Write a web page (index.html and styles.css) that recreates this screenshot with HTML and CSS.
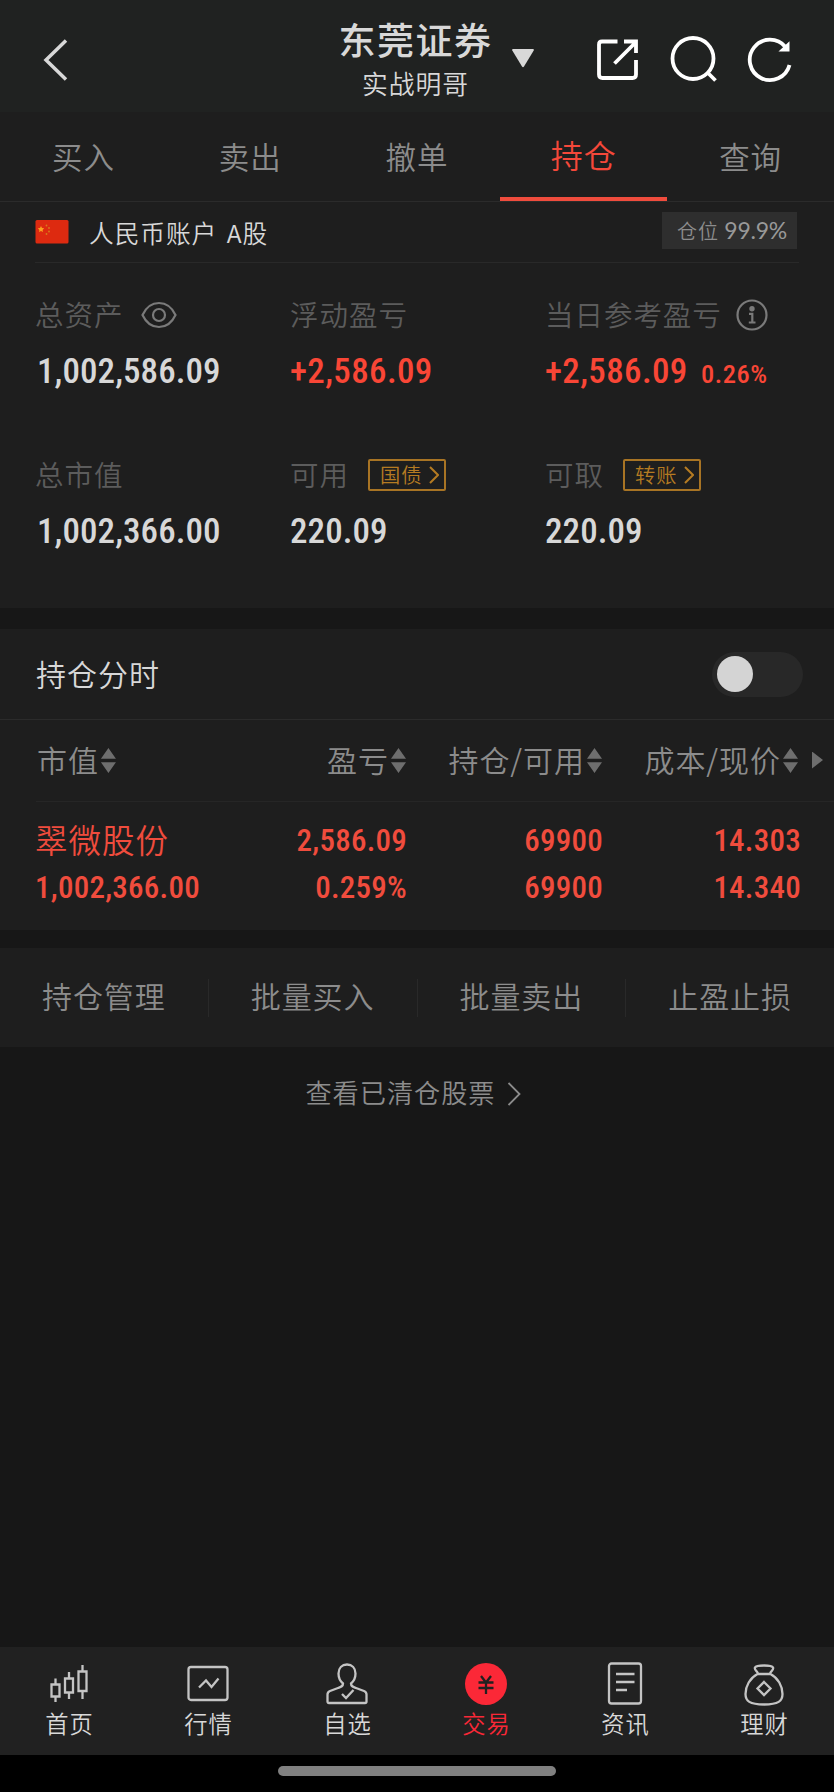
FILE: index.html
```
<!DOCTYPE html>
<html lang="zh-CN">
<head>
  <meta charset="UTF-8">
  <title>东莞证券 - 持仓</title>
  <meta name="viewport" content="width=device-width, initial-scale=1.0">
  <link rel="stylesheet" href="styles.css">
</head>
<body>

  <header class="header">
    <svg class="back" width="28" height="44" viewBox="0 0 28 44"><path d="M25 2.500 5 22l20 19.500"/></svg>
    <div class="title">
      <h1>东莞证券</h1>
      <p>实战明哥</p>
    </div>
    <div class="tools">
      <svg class="caret" width="24" height="20" viewBox="0 0 24 20"><path d="M2 1h20q1.500 0 .7 1.500L13 18.500q-1 1.500-2 0L1.300 2.500Q.5 1 2 1z"/></svg>
      <svg class="tool" width="48" height="48" viewBox="0 0 48 48"><path d="M24.500 6.500H9q-3 0-3 3v30q0 3.500 3.500 3.500h30q3.500 0 3.500-3.500V25M21.500 28.500 43 7M31 6.500h12V18"/></svg>
      <svg class="tool" width="48" height="48" viewBox="0 0 48 48"><circle cx="23" cy="23.500" r="20.500"/><path d="m37.500 37.500 8 8"/></svg>
      <svg class="tool" width="48" height="48" viewBox="0 0 48 48"><path d="M43.500 30A20.200 20.200 0 1 1 39.500 12"/><path class="solid" d="M35 15.500h7.500V8.500z"/></svg>
    </div>
  </header>

  <nav class="tabs">
    <a>买入</a>
    <a>卖出</a>
    <a>撤单</a>
    <a class="active">持仓</a>
    <a>查询</a>
  </nav>

  <section class="account">
    <div class="account-bar">
      <svg width="34" height="24" viewBox="0 0 34 24">
        <g stroke="none">
          <rect x=".5" width="33" height="23.500" rx="1.500" fill="#dd2a10"/>
          <path fill="#fba01f" d="m6 6 1 2 2.200.3-1.600 1.600.4 2.200-2-1-2 1 .4-2.200-1.600-1.600L5 8z"/>
          <g fill="#d87b1c"><circle cx="11.500" cy="5.500" r=".9"/><circle cx="14" cy="8" r=".9"/><circle cx="14" cy="11.500" r=".9"/><circle cx="11.500" cy="14" r=".9"/></g>
        </g>
      </svg>
      <span class="account-name">人民币账户 A股</span>
      <span class="position">仓位 <b>99.9%</b></span>
    </div>

    <div class="summary">
      <div class="cell">
        <div class="label"><span>总资产</span>
          <svg class="eye" width="36" height="28" viewBox="0 0 36 28"><path d="M1.500 14C9-2 27-2 34.500 14 27 30 9 30 1.500 14z"/><circle cx="18" cy="14" r="6"/></svg>
        </div>
        <div class="num value indent">1,002,586.09</div>
      </div>
      <div class="cell">
        <div class="label"><span>浮动盈亏</span></div>
        <div class="num value red">+2,586.09</div>
      </div>
      <div class="cell">
        <div class="label"><span>当日参考盈亏</span>
          <svg class="info" width="32" height="32" viewBox="0 0 32 32"><circle cx="16" cy="16" r="14.500"/><circle class="dot" cx="16" cy="9.800" r="2.700"/><path d="M13 14.800h3.300v8M12.800 23.500h6.700"/></svg>
        </div>
        <div class="num value red">+2,586.09 <small>0.26%</small></div>
      </div>
      <div class="cell">
        <div class="label"><span>总市值</span></div>
        <div class="num value indent">1,002,366.00</div>
      </div>
      <div class="cell">
        <div class="label"><span>可用</span> <a class="link-btn"><span>国债</span><svg width="10" height="18" viewBox="0 0 10 18"><path d="m1 1 8 8-8 8"/></svg></a></div>
        <div class="num value">220.09</div>
      </div>
      <div class="cell">
        <div class="label"><span>可取</span> <a class="link-btn"><span>转账</span><svg width="10" height="18" viewBox="0 0 10 18"><path d="m1 1 8 8-8 8"/></svg></a></div>
        <div class="num value">220.09</div>
      </div>
    </div>
  </section>

  <section class="holdings">
    <div class="chart-row">
      <span class="chart-name">持仓分时</span>
      <span class="switch"></span>
    </div>
    <div class="thead">
      <span>市值<i class="sort"></i></span>
      <span>盈亏<i class="sort"></i></span>
      <span>持仓/可用<i class="sort"></i></span>
      <span>成本/现价<i class="sort"></i></span>
      <i class="more"></i>
    </div>
    <div class="stock">
      <div><strong>翠微股份</strong><span class="num">1,002,366.00</span></div>
      <div><span class="num">2,586.09</span><span class="num">0.259%</span></div>
      <div><span class="num">69900</span><span class="num">69900</span></div>
      <div><span class="num">14.303</span><span class="num">14.340</span></div>
    </div>
  </section>

  <div class="actions">
    <a>持仓管理</a>
    <a>批量买入</a>
    <a>批量卖出</a>
    <a>止盈止损</a>
  </div>

  <a class="cleared"><span>查看已清仓股票</span><svg width="14" height="24" viewBox="0 0 14 24"><path d="m1.500 1 11 11-11 11"/></svg></a>

  <footer class="bottom-nav">
    <a>
      <svg width="44" height="44" viewBox="0 0 44 44"><path d="M4.500 22.500h8v12h-8zM8.500 16.500v6M8.500 34.500v5.500M18 16.500h8v14h-8zM22 10v6.500M22 30.500V37M31.500 9.500h8V29h-8zM35.500 3v6.500M35.500 29v8"/></svg>
      首页
    </a>
    <a>
      <svg width="44" height="44" viewBox="0 0 44 44"><rect x="2.500" y="5" width="39" height="33" rx="2.500"/><path d="m13 25.500 7-7 5.500 6.500 7-8.500"/></svg>
      行情
    </a>
    <a>
      <svg width="44" height="44" viewBox="0 0 44 44"><path d="M18 21.500c-3-2.500-4.500-6-4.500-10C13.500 6 17 2.500 22 2.500S30.500 6 30.500 11.500c0 4-1.500 7.500-4.500 10 0 3 2 3.500 5 4.500l8 3q2.500 1 2.500 3.500v7q0 1.500-1.500 1.500H4q-1.500 0-1.500-1.500v-7Q2.500 30 5 29l8-3c3-1 5-1.500 5-4.500z"/><path d="m17 32 4 4 7.500-8"/></svg>
      自选
    </a>
    <a class="current">
      <svg width="44" height="44" viewBox="0 0 44 44"><circle cx="22" cy="22" r="21"/><path d="m17 14 5 6.500 5-6.500M14.500 20.500h15M14.500 26h15M22 20.500V32"/></svg>
      交易
    </a>
    <a>
      <svg width="44" height="44" viewBox="0 0 44 44"><rect x="6" y="1.500" width="32" height="40" rx="2.500"/><path d="M13 12h18.500M13 20h18.500M13 28h11"/></svg>
      资讯
    </a>
    <a>
      <svg width="44" height="44" viewBox="0 0 44 44"><path d="M16 11.500c-1.500-3-4-4-3-6Q14 3.500 22 3.500t9 2c1 2-1.500 3-3 6M15.500 12h13C36 16 40.500 24 40.500 32c0 7-4 10.500-18.500 10.500S3.500 39 3.500 32C3.500 24 8 16 15.500 12z"/><path d="m22 20 6.500 6.500L22 33l-6.500-6.500z"/></svg>
      理财
    </a>
  </footer>
  <div class="home-bar"></div>

</body>
</html>
```
FILE: styles.css
```
* {
  box-sizing: border-box;
  margin: 0;
  padding: 0;
}

body {
  display: flex;
  flex-direction: column;
  height: 1792px;
  background: #171717;
  color: #d8d8d8;
  font-family: "Noto Sans CJK SC", sans-serif;
  font-weight: 350;
  letter-spacing: 0.06em;
  white-space: nowrap;
}

svg {
  display: block;
  flex: none;
  fill: none;
  stroke: currentColor;
}

.num {
  font-family: Roboto, sans-serif;
  font-weight: 500;
  font-stretch: 85%;
  letter-spacing: 0.008em;
}

.red {
  color: #f94636;
}

/* header */
.header {
  display: grid;
  grid-template-columns: 1fr 154px 1fr;
  height: 112px;
  padding: 0 40px 0 41px;
  background: #202221;
}

.back {
  margin-top: 38px;
  stroke-width: 3.5;
}

.title {
  display: flex;
  flex-direction: column;
  align-items: center;
  margin: 0 2px 0 -2px;
  padding-top: 13px;
}

.title h1 {
  font-size: 37px;
  font-weight: 500;
  letter-spacing: 0.04em;
  line-height: 52px;
}

.title p {
  font-size: 25.800px;
  line-height: 35px;
}

.tools {
  display: flex;
  padding-top: 35px;
  color: #fff;
}

.caret {
  margin: 13px auto 0 16px;
  fill: #d8d8d8;
  stroke: none;
}

.tool {
  margin-left: 28.500px;
  stroke-width: 3.8;
}

.tool .solid {
  fill: #fff;
  stroke-width: 2;
}

/* tabs */
.tabs {
  display: flex;
  height: 90px;
  background: #1e1e1e;
  border-bottom: 1px solid #2b2b2b;
}

.tabs a {
  flex: 1;
  height: 89px;
  color: #8c8c8c;
  font-size: 30.500px;
  line-height: 88px;
  text-align: center;
}

.tabs .active {
  color: #f5483a;
  font-size: 32px;
  line-height: 85px;
  border-bottom: 4px solid #f04c3d;
}

/* account */
.account {
  height: 406px;
  background: #1e1e1e;
}

.account-bar {
  display: flex;
  align-items: center;
  height: 61px;
  margin: 0 35px;
  border-bottom: 1px solid #292929;
}

.account-name {
  margin: 0 0 1px 20px;
  font-size: 24.700px;
  word-spacing: 3px;
}

.position {
  margin: 0 2px 3px auto;
  padding: 0 10px 0 15px;
  background: #2e2e2e;
  color: #8c8c8c;
  font-size: 20px;
  line-height: 37px;
}

.position b {
  color: #999;
  font-family: Lato, sans-serif;
  font-size: 23px;
  font-weight: 400;
  letter-spacing: -0.01em;
}

.summary {
  display: grid;
  grid-template-columns: 255px 255px 1fr;
  grid-auto-rows: 160px;
  padding: 32px 0 0 35px;
}

.label {
  display: flex;
  align-items: center;
  height: 40px;
  color: #5c5c5c;
  font-size: 28.500px;
}

.label > span {
  margin-bottom: 3px;
}

.eye,
.info {
  color: #7a7a7a;
  stroke-width: 2.2;
}

.eye {
  margin-left: 18px;
}

.info {
  margin-left: 14px;
}

.info .dot {
  fill: currentColor;
  stroke: none;
}

.link-btn {
  display: flex;
  align-items: center;
  gap: 7px;
  height: 32px;
  margin-left: 19px;
  padding: 0 5px 0 10px;
  border: 2px solid #a87424;
  border-radius: 2px;
  color: #b57b22;
  font-size: 20.300px;
}

.link-btn span {
  margin-bottom: 2px;
}

.link-btn svg {
  stroke-width: 2;
}

.value {
  margin-top: 17px;
  font-size: 35px;
  letter-spacing: 0.002em;
  line-height: 40px;
}

.value.red {
  letter-spacing: 0.01em;
}

.value small {
  margin-left: 5px;
  font-size: 26.500px;
  letter-spacing: 0.02em;
}

.indent {
  margin-left: 2px;
}

/* holdings */
.holdings {
  height: 301px;
  margin-top: 21px;
  background: #1e1e1e;
}

.chart-row {
  display: flex;
  align-items: center;
  justify-content: space-between;
  height: 91px;
  padding: 0 31px 0 36px;
  border-bottom: 1px solid #2b2b2b;
  font-size: 30px;
}

.chart-name {
  margin-bottom: 3px;
}

.switch {
  width: 91px;
  height: 45px;
  padding: 4px 5px;
  background: #282828;
  border-radius: 23px;
}

.switch::before {
  content: "";
  display: block;
  width: 36px;
  height: 36px;
  background: #d4d4d4;
  border-radius: 50%;
}

.thead,
.stock {
  display: grid;
  grid-template-columns: 170px 201px 196px 198px;
  margin-left: 36px;
}

.thead {
  grid-template-columns: 170px 201px 196px 196px 1fr;
  align-items: center;
  height: 82px;
  border-bottom: 1px solid #262626;
  color: #8c8c8c;
  font-size: 30px;
}

.thead span {
  display: flex;
  align-items: center;
  justify-content: flex-end;
  margin: 0 1px 4px -1px;
}

.thead span:first-child {
  justify-content: flex-start;
  margin-left: 1px;
}

/* pair of up and down triangles */
.sort {
  width: 15px;
  height: 25px;
  margin: 4px 0 0 2px;
  background: #6e6e6e;
  clip-path: polygon(50% 0, 100% 43%, 0 43%, 0 57%, 100% 57%, 50% 100%, 0 57%, 0 43%);
}

.more {
  width: 11px;
  height: 17px;
  margin: 0 0 1px 13px;
  background: #6e6e6e;
  clip-path: polygon(0 0, 100% 50%, 0 100%);
}

.stock {
  padding-top: 15px;
  color: #f04c3d;
  text-align: right;
}

.stock div:first-child {
  margin-left: -1px;
  text-align: left;
}

.stock strong,
.stock span {
  display: block;
  height: 47px;
  font-size: 31px;
  line-height: 48px;
}

.stock strong {
  font-size: 32.500px;
  font-weight: 350;
  line-height: 43px;
}

/* actions */
.actions {
  display: flex;
  align-items: center;
  height: 99px;
  margin-top: 18px;
  background: #1e1e1e;
}

.actions a {
  flex: 1;
  height: 38px;
  color: #8c8c8c;
  font-size: 30px;
  line-height: 33px;
  text-align: center;
}

.actions a + a {
  border-left: 1px solid #292929;
}

.cleared {
  display: flex;
  align-items: center;
  justify-content: center;
  gap: 11px;
  height: 93px;
  margin-right: 8px;
  color: #8c8c8c;
  font-size: 26.200px;
}

.cleared span {
  margin-bottom: 4px;
}

.cleared svg {
  stroke-width: 1.8;
}

/* bottom nav */
.bottom-nav {
  display: flex;
  height: 108px;
  margin-top: auto;
  background: #212121;
}

.bottom-nav a {
  display: flex;
  flex: 1;
  flex-direction: column;
  align-items: center;
  padding-top: 15px;
  font-size: 23.300px;
  line-height: 35px;
}

.bottom-nav svg {
  margin-left: -1px;
  color: #c4c4c4;
  stroke-width: 2.3;
}

.bottom-nav .current {
  color: #f92837;
}

.current circle {
  fill: #fb2837;
  stroke: none;
}

.current path {
  stroke: #212121;
}

.home-bar {
  height: 37px;
  padding-top: 11px;
  background: #000;
}

.home-bar::before {
  content: "";
  display: block;
  width: 278px;
  height: 10px;
  margin: 0 auto;
  background: #808080;
  border-radius: 5px;
}
```
